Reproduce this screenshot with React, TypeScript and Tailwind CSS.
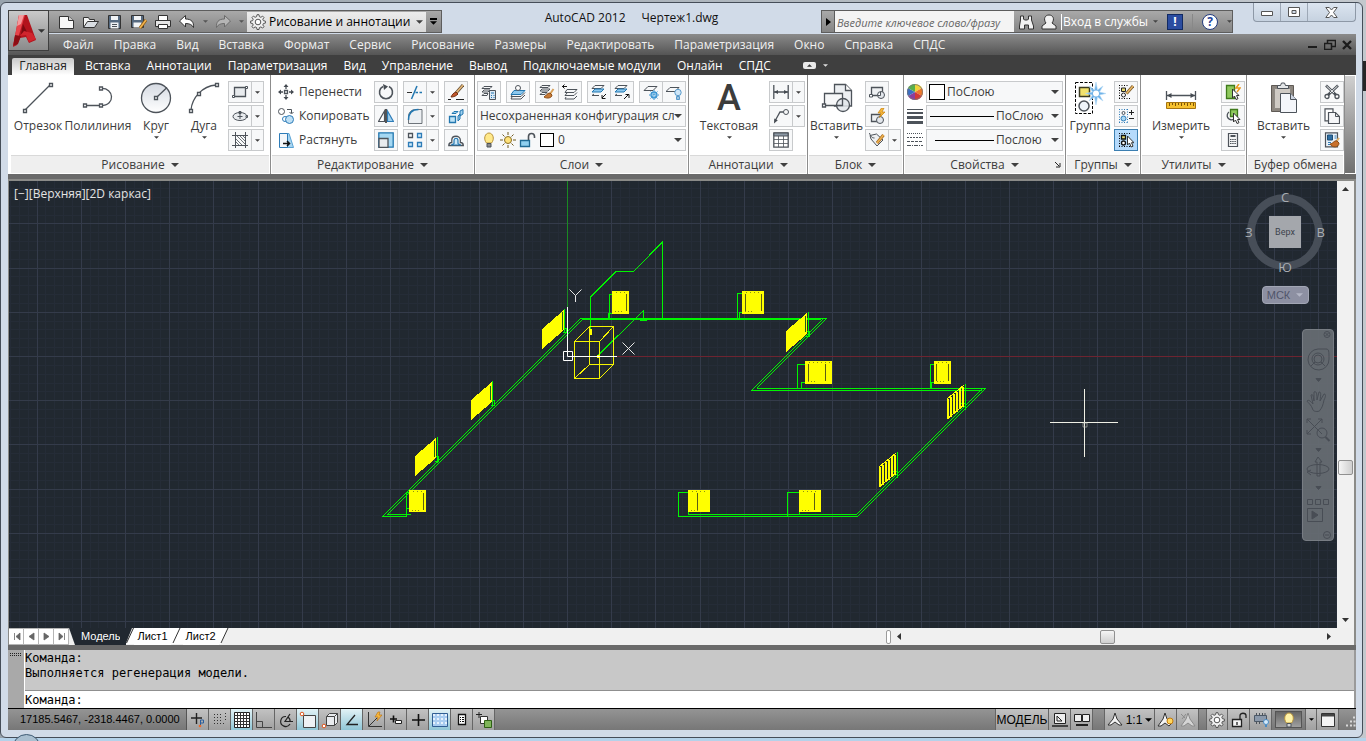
import React from "react";

type IconProps = { children: React.ReactNode; w?: number; h?: number; className?: string };

const Icon = ({ children, w = 16, h = 16, className = "" }: IconProps) => (
  <svg width={w} height={h} viewBox={`0 0 ${w} ${h}`} fill="none" stroke="#4d535a" strokeWidth="1" className={`shrink-0 ${className}`} aria-hidden="true">
    {children}
  </svg>
);

const Caret = ({ size = 7, className = "text-[#404040]" }: { size?: number; className?: string }) => (
  <svg width={size} height={Math.ceil(size / 2)} viewBox="0 0 8 4" className={`shrink-0 ${className}`} aria-hidden="true">
    <path d="M0 0h8L4 4z" fill="currentColor" />
  </svg>
);

/* ---------- big ribbon icons ---------- */

const LineIcon = () => (
  <Icon w={32} h={32} className="stroke-[1.3]">
    <path d="M3 28 28 3" />
    <path d="M1.500 27.500h3v3h-3zM27.500 1.500h3v3h-3z" fill="#fff" />
  </Icon>
);

const PolylineIcon = () => (
  <Icon w={32} h={32} className="stroke-[1.3]">
    <path d="M3 23.500h16c15 0 13-18 0-17" />
    <path d="M1.500 22h3v3h-3zM17.500 22h3v3h-3zM17.500 5h3v3h-3z" fill="#fff" />
  </Icon>
);

const CircleIcon = () => (
  <Icon w={32} h={32} className="stroke-[1.3]">
    <defs>
      <linearGradient id="circ" x1="0" y1="0" x2="0" y2="1">
        <stop offset="0" stopColor="#d5dae2" />
        <stop offset="1" stopColor="#fff" />
      </linearGradient>
    </defs>
    <circle cx="16" cy="16" r="14.500" fill="url(#circ)" />
    <path d="M17 15 27 5.500" />
    <path d="M14.500 14.500h3v3h-3z" fill="#fff" />
  </Icon>
);

const ArcIcon = () => (
  <Icon w={32} h={32} className="stroke-[1.3]">
    <path d="M3 28C4 16 14 4 28 3" />
    <path d="M1.500 27.500h3v3h-3zM27.500 1.500h3v3h-3zM9.500 10.500h3v3h-3z" fill="#fff" />
  </Icon>
);

const InsertIcon = () => (
  <Icon w={32} h={32} className="stroke-[1.3]">
    <path d="M13.500 20V2.500h11l6 6V24h-17z" fill="#eceff2" />
    <path d="M24.500 2.500v6h6" fill="#fff" />
    <path d="M3.500 11.500h18v12h-18z" fill="#f7f8f9" />
    <circle cx="22" cy="23" r="6.500" fill="#e3e7ec" fillOpacity=".85" />
    <path d="M21.500 17v6.500H16" />
    <path d="M1.500 22h3v3h-3z" fill="#fff" />
  </Icon>
);

const GroupIcon = () => (
  <Icon w={32} h={32}>
    <path d="M1.500.5h17v31h-17z" stroke="#000" strokeDasharray="3 1.500" />
    <path d="M5.500 5.500h10v9h-10z" fill="#f2e26c" stroke="#3a3a22" strokeWidth="1.500" />
    <circle cx="10" cy="24" r="5" fill="#eef4fa" strokeWidth="1.500" />
    <path d="M22 0l1.500 8L29 4l-3.500 6 6.500 1.500-6.500 1.500 3.500 6-5.500-4L22 23l-1.500-8-5.500 4 3.500-6-7-1.500 7-1.500-3.500-6 5.500 4z" fill="#6fb2e8" stroke="#b7dbf6" strokeWidth=".6" />
    <circle cx="22" cy="11.500" r="3" fill="#fff" stroke="none" />
  </Icon>
);

const MeasureIcon = () => (
  <Icon w={32} h={32}>
    <path d="M1.500 9v9M30.500 9v9M2 13.500h28" strokeWidth="1.300" />
    <path d="M2 13.500l4.500-2.500v5zM30 13.500 25.500 11v5z" fill="#454b52" stroke="none" />
    <path d="M1.500 20.500h29v6h-29z" fill="#f6c12f" stroke="#a57411" />
    <path d="M4.500 21v3M7.500 21v2M10.500 21v3M13.500 21v2M16.500 21v3M19.500 21v2M22.500 21v3M25.500 21v2M28.500 21v3" stroke="#7b5408" />
  </Icon>
);

const PasteIcon = () => (
  <Icon w={32} h={32}>
    <path d="M3.500 3.500h22v26h-22z" fill="#8c867f" stroke="#5f5a55" />
    <path d="M6.500 6.500h16v20h-16z" fill="#cfcac4" stroke="#8f8a84" />
    <path d="M9.500 6.500v-3h3l1-2.500h3l1 2.500h3v3z" fill="#e4e6e8" />
    <path d="M12.500 11.500h10l6 6v13h-16z" fill="#f4f6fa" />
    <path d="M22.500 11.500v6h6" fill="#cdd5e2" />
  </Icon>
);

/* ---------- small ribbon icons ---------- */

const sm = {
  rect: (
    <Icon><path d="M2.500 3.500h11v9h-11z" fill="#e8ebee" strokeWidth="1.300" /><path d="M.5 11.500h2v2h-2zM13.500 2.500h2v2h-2z" fill="#fff" /></Icon>
  ),
  ellipse: (
    <Icon><ellipse cx="8" cy="8.500" rx="7" ry="4" fill="#e8ebee" /><path d="M8 6v5M5.500 8.500h5M7 3.500h2v2H7zM14 7.500h1.500v2H14z" /></Icon>
  ),
  hatch: (
    <Icon><path d="M3.500 0v16M13.500 0v16M0 3.500h16M0 13.500h16" /><path d="M4 7l6 6M4 10l3 3M5 4l8 8M8 4l5 5M11 4l2 2" stroke="#6d7378" /></Icon>
  ),
  move: (
    <Icon><path d="M8 1v4M8 11v4M1 8h4M11 8h4M6.500 6.500h3v3h-3z" strokeWidth="1.300" /><path d="M8 0l2.500 3h-5zM8 16l2.500-3h-5zM0 8l3-2.500v5zM16 8l-3-2.500v5z" fill="#454b52" stroke="none" /></Icon>
  ),
  copy: (
    <Icon><circle cx="3.500" cy="3.500" r="3" /><circle cx="7" cy="11" r="2.500" stroke="#2e7cb8" fill="#fff" /><circle cx="11.500" cy="11.500" r="4" stroke="#2e7cb8" fill="#bfe0f5" /><path d="M9 1.500h4.500V5M11.500 4l2 2 2-2" /></Icon>
  ),
  stretch: (
    <Icon><path d="M7 1.500h4l4.500 14H7z" fill="#a9d6f2" stroke="#5aa3d4" /><path d="M1.500 1.500h8v14h-8z" fill="#f4f7fa" stroke="#2e7cb8" /><path d="M5 11.500h6M9 9l2.500 2.500L9 14" stroke="#111" strokeWidth="1.500" /></Icon>
  ),
  rotate: (
    <Icon><path d="M11 2.500a6.500 6.500 0 1 1-6 0" strokeWidth="1.600" /><path d="M5 0l5 2.500L6 6z" fill="#454b52" stroke="none" /></Icon>
  ),
  mirror: (
    <Icon><path d="M6.500 3v10.500h-6z" fill="#fff" strokeWidth="1.200" /><path d="M9.500 3v10.500h6z" fill="#9fd0ee" stroke="#2e7cb8" strokeWidth="1.200" /><path d="M8 1v14" strokeWidth="1.500" stroke="#222" /></Icon>
  ),
  scale: (
    <Icon><path d="M.8.8h14.400v14.400H.8z" fill="#a5d8f3" stroke="#2277b0" strokeWidth="1.300" /><path d="M1 6.500h9v9H1z" fill="#e9ecef" strokeWidth="1.300" /></Icon>
  ),
  trim: (
    <Icon><path d="M0 8.500h5" stroke="#333" /><path d="M8.500 8.500h7.500" stroke="#2277b0" strokeDasharray="2.500 1.500" strokeWidth="1.300" /><path d="M10 2 4.500 15" stroke="#2277b0" strokeWidth="1.500" /></Icon>
  ),
  fillet: (
    <Icon><path d="M1.500 15.500V9c0-5 3-7.500 7.500-7.500h6v14z" fill="#eceff2" strokeWidth=".8" /><path d="M1.500 12c0-7 4-10.500 10-10.500" stroke="#2277b0" strokeWidth="1.500" /></Icon>
  ),
  array: (
    <Icon><path d="M1.500 1.500h4v4h-4z" strokeWidth="1.300" /><path d="M10.500 1.500h4v4h-4zM1.500 10.500h4v4h-4zM10.500 10.500h4v4h-4z" fill="#cfe9f8" stroke="#2e7cb8" strokeWidth="1.300" /></Icon>
  ),
  erase: (
    <Icon><path d="M15 1 8 9" stroke="#5a4630" strokeWidth="3" /><path d="M15 1 8 9" stroke="#e2b678" strokeWidth="1.800" /><path d="M8 8c-3 1-4 3-5 5 3 0 5-1 7-3z" fill="#c2562c" stroke="#70300f" /><path d="M0 15.500h3M8 15.500h8" stroke="#222" /></Icon>
  ),
  explode: (
    <Icon><path d="M1.500 8.500h6v6h-6z" fill="#bfe3f6" stroke="#2277b0" strokeWidth="1.300" /><path d="M4 5.500 6 3.500h4l-2 2zM10 8l2-2v5l-2 2zM12 3l3-1.500V6L12 8z" fill="#9fd0ee" stroke="#2277b0" /></Icon>
  ),
  offset: (
    <Icon><path d="M.8 13.500c0-3 2-3 3-3V8c0-5 8.500-5 8.500 0v2.500c1 0 3 0 3 3z" fill="#fff" strokeWidth="1.300" /><path d="M3.500 13c0-1 2.500-1 2.500-1.500V8.500c0-3 4-3 4 0v3c0 .5 2.500.5 2.500 1.500z" fill="#cfe9f8" stroke="#2277b0" strokeWidth="1.200" /></Icon>
  ),
  layerProps: (
    <Icon><path d="M3 2.500h8l-2 2H1zM3 6h6l-2 2H1zM3 9.500h4l-1 2H1z" /><path d="M8.500 6.500h6v9h-6z" fill="#dce9f5" /><path d="M10 9h3M10 11.500h1M12.500 11.500h1M10 13.500h1M12.500 13.500h1" stroke="#2277b0" /></Icon>
  ),
  layerCurrent: (
    <Icon><path d="M4 6.500h11l-4 4H1z" fill="#8cc8ee" stroke="#2277b0" /><path d="M2 11l-1 1.500h10l4-4M2 13l-1 2h10l4-4" /><circle cx="8" cy="4" r="2.500" fill="#fff" /></Icon>
  ),
  layerMatch: (
    <Icon><path d="M3 1.500h8l-2 2H1zM3 5h8l-2 2H1zM3 8.500h5l-2 2H1z" /><path d="M14.500 5 11 10" stroke="#d9a25a" strokeWidth="2" /><path d="M11 9c-3 0-4 3-6 4 3 2 8 1 8-2z" fill="#c77a35" stroke="#8b4c16" /></Icon>
  ),
  layerPrev: (
    <Icon><path d="M0 2.500h5M2.500.5l-2 2 2 2" stroke="#111" /><path d="M5 5.500h10l-3 3H3zM5 9l-2 2.500h9l3-3M4 13l-1 2h9l3-3" /></Icon>
  ),
  layerIso: (
    <Icon><path d="M4 1.500h9l-3 3H1z" /><path d="M4 5h9l-3 3H1z" fill="#8cc8ee" stroke="#2277b0" /><path d="M3 10l-2 1.500h7" /><path d="M15 10l-4 4M11 11v3.500h3.500" stroke="#111" /></Icon>
  ),
  layerUniso: (
    <Icon><path d="M4 1.500h9l-3 3H1z" /><path d="M4 5h9l-3 3H1z" fill="#8cc8ee" stroke="#2277b0" /><path d="M3 10l-2 1.500h7" /><path d="M10 15l4.500-4.500M11.500 10.500H15V14" stroke="#111" /></Icon>
  ),
  layerFreeze: (
    <Icon><path d="M5 2.500h9l-4 4H1z" /><circle cx="11" cy="11" r="3" stroke="#3a94d2" fill="#d9effb" strokeWidth="1.300" /><path d="M11 6v10M6 11h10M7.500 7.500l7 7M14.500 7.500l-7 7" stroke="#3a94d2" strokeDasharray="1.500 1.500" /></Icon>
  ),
  layerOff: (
    <Icon><path d="M4 3.500h9l-4 4H0z" /><circle cx="12" cy="8.500" r="3.200" fill="#cfe6f7" stroke="#5a9bcb" /><path d="M10.500 12.500h3v3h-3z" fill="#9cc3e0" stroke="#5a9bcb" /></Icon>
  ),
  dim: (
    <Icon><path d="M.8 1v14M15.200 1v14M1 8h14" strokeWidth="1.300" /><path d="M1 8l4-2v4zM15 8l-4-2v4z" fill="#454b52" stroke="none" /></Icon>
  ),
  leader: (
    <Icon><circle cx="13" cy="4" r="2.500" /><path d="M10.500 4H7L2 13" strokeWidth="1.300" /><path d="M1 15.500l.3-5 3.500 1.800z" fill="#454b52" stroke="none" /></Icon>
  ),
  table: (
    <Icon><path d="M.8.8h14.400v14.400H.8z" fill="#fff" strokeWidth="1.300" /><path d="M1 1h14v3H1z" fill="#8b98a5" /><path d="M1 7.500h14M1 11.500h14M5.500 4v11M10.500 4v11" strokeWidth=".8" /></Icon>
  ),
  blockNew: (
    <Icon><path d="M2.500 3.500h11v8h-11z" fill="#eef0f2" strokeWidth="1.300" /><circle cx="12" cy="11" r="3.500" fill="#e3e7ec" /><path d="M11.500 8v3.500H9M.5 10.500h3v2.500h-3z" fill="#fff" /></Icon>
  ),
  blockEdit: (
    <Icon><path d="M2.500 6.500h9v7h-9z" fill="#eef0f2" strokeWidth="1.300" /><circle cx="11" cy="12" r="3.500" fill="#e3e7ec" /><path d="M12.500 0 9 5h3l-1.500 4.500L16 4h-3l2-4z" fill="#f6b73c" stroke="#c47e0c" strokeWidth=".7" /></Icon>
  ),
  attr: (
    <Icon><path d="M1 3.500 7.500 2 14 8l-6 6-6-7z" fill="#eef0f2" /><path d="M.5 1c1 4 3 5 5 5" /><path d="M14.500 3 8 11" stroke="#a5691c" strokeWidth="3" /><path d="M14.500 3 8 11" stroke="#f0b352" strokeWidth="1.500" /></Icon>
  ),
  grpEdit: (
    <Icon><path d="M1 1.500h9M1 14.500h11M1.500 1v14" strokeDasharray="1 1.500" stroke="#000" /><path d="M3.500 4h4v3.500h-4z" fill="#e9dc6f" stroke="#222" /><circle cx="5.500" cy="11" r="2" stroke="#222" fill="#fff" /><path d="M15 2 8.500 9.500" stroke="#7a5a2a" strokeWidth="3" /><path d="M15 2 8.500 9.500" stroke="#eab765" strokeWidth="1.500" /></Icon>
  ),
  grpAdd: (
    <Icon><path d="M1 1.500h9M1 14.500h9M1.500 1v14M9.500 1v14" strokeDasharray="1 1.500" stroke="#2e7cb8" /><circle cx="5.500" cy="5" r="1.500" /><circle cx="5.500" cy="10.500" r="2.500" fill="#a9d6f2" stroke="#2e7cb8" /><path d="M11 4.500h5M13.500 2v5M11 10.500h5" stroke="#222" /></Icon>
  ),
  grpSel: (
    <Icon><path d="M1 1.500h12M1 14.500h12M1.500 1v14" strokeDasharray="1 1.500" stroke="#000" /><path d="M3.500 3.500h4V7h-4z" fill="#e9dc6f" stroke="#111" strokeWidth="1.300" /><circle cx="5.500" cy="11" r="2" stroke="#111" strokeWidth="1.300" fill="#fff" /><path d="M9.500 4v9l2-2 1.500 4 2-.8-1.500-3.500h2.500z" fill="#fff" stroke="#333" /></Icon>
  ),
  quickSel: (
    <Icon><path d="M1.500 1.500h8v13h-8z" fill="#8fc95d" stroke="#3f7a1c" strokeWidth="1.300" /><path d="M14 0l-3 4h4l-3 4" stroke="#eb9b1f" strokeWidth="1.500" /><path d="M7.500 5v9l2-2 1.500 3.500 2-.8-1.500-3.200H14z" fill="#fff" stroke="#333" /></Icon>
  ),
  selAll: (
    <Icon><path d="M5.500 1.500h7v7h-7z" fill="#8fc95d" stroke="#3f7a1c" strokeWidth="1.300" /><path d="M4 4a4 4 0 1 0 5 7" strokeWidth="1.300" /><path d="M8.500 5v9l2-2 1.500 3.500 2-.8-1.500-3.200H15z" fill="#fff" stroke="#333" /></Icon>
  ),
  calc: (
    <Icon><path d="M3.500 1.500h9v13h-9z" fill="#f4f5f6" strokeWidth="1.200" /><path d="M5.500 4h5" strokeWidth="2" /><path d="M5 7.500h6M5 9.500h6M5 11.500h6" strokeDasharray="1.500 .7" /></Icon>
  ),
  cut: (
    <Icon><path d="M2 1.500 12 11M14 1.500 4 11" strokeWidth="2.600" /><path d="M2.500 2 10 9M13.500 2 6 9" stroke="#f0f2f4" strokeWidth="1" /><circle cx="3" cy="12.500" r="2" fill="#fff" strokeWidth="1.300" /><circle cx="13" cy="12.500" r="2" fill="#fff" strokeWidth="1.300" /></Icon>
  ),
  copyClip: (
    <Icon><path d="M1 .8h8v12H1z" fill="#fff" strokeWidth="1.200" /><path d="M4.500 4.500h7l4 4v7h-11z" fill="#f5f6f8" strokeWidth="1.200" /><path d="M11.500 4.500v4h4" /></Icon>
  ),
  matchProps: (
    <Icon><path d="M1.500.8h12v14h-12z" fill="#e9f1f8" strokeWidth="1.200" /><path d="M3.500 3h5v5h-5z" fill="#2d6ea3" stroke="#1d4c74" /><path d="M10.500 4h2M10.500 6h2M4 10.500h3M4 12.500h2" stroke="#2e7cb8" /><path d="M15 6l-3 4" stroke="#e3b36b" strokeWidth="2" /><path d="M13 9c-3-1-4 3-7 3 2 4 9 4 9-1z" fill="#c9702b" stroke="#8b4c16" /></Icon>
  ),
};

/* ---------- ribbon building blocks ---------- */

const cell = "flex h-[22px] w-6 items-center justify-center border border-[#c8cacc] bg-[#f7f8f9]";

const Small = ({ icon, label, active }: { icon: React.ReactNode; label: string; active?: boolean }) => (
  <button aria-label={label} className={active ? "flex h-[22px] w-6 items-center justify-center border border-[#3c7fb1] bg-[#b5dafc]" : cell}>
    {icon}
  </button>
);

const Split = ({ icon, label }: { icon: React.ReactNode; label: string }) => (
  <div className="flex">
    <button aria-label={label} className={cell}>{icon}</button>
    <button aria-label={`${label}: ещё`} className="flex h-[22px] w-3 items-center justify-center border border-l-0 border-[#c8cacc] bg-[#f7f8f9]">
      <Caret size={5} />
    </button>
  </div>
);

const Col = ({ children, className = "" }: { children: React.ReactNode; className?: string }) => (
  <div className={`flex flex-col gap-[2px] pt-[6px] ${className}`}>{children}</div>
);

const Big = ({ icon, label, width, caret }: { icon: React.ReactNode; label: string; width: string; caret?: boolean }) => (
  <button className={`flex flex-col items-center pt-[7px] ${width}`}>
    {icon}
    <span className="mt-1 whitespace-nowrap leading-4">{label}</span>
    {caret && <Caret size={5} className="mt-[2px] text-[#404040]" />}
  </button>
);

const TextBtn = ({ icon, label }: { icon: React.ReactNode; label: string }) => (
  <button className="flex h-[22px] items-center gap-[5px] whitespace-nowrap px-[2px]">
    {icon}
    {label}
  </button>
);

const Panel = ({ title, width, children, noCaret, launcher }: { title: string; width: string; children: React.ReactNode; noCaret?: boolean; launcher?: boolean }) => (
  <section className={`flex shrink-0 flex-col border-r border-[#8c8c8c] ${width}`}>
    <div className="flex h-20">{children}</div>
    <div className="mx-px flex h-[18px] items-center justify-center gap-[6px] whitespace-nowrap border-t border-[#d9d9d9] bg-[#efefef] leading-4">
      <span>{title}</span>
      {!noCaret && <Caret size={8} />}
      {launcher && (
        <Icon w={7} h={7} className="absolute ml-[146px]"><path d="M1 1l4 4M6 2v4H2" stroke="#222" /></Icon>
      )}
    </div>
  </section>
);

const Picker = ({ label, value, before, pad = "" }: { label: string; value: string; before?: React.ReactNode; pad?: string }) => (
  <div className="flex h-[22px] w-full items-center border border-[#c8cacc] bg-[#f7f8f9] pr-[3px]">
    {before}
    <select aria-label={label} className={`h-full min-w-0 flex-1 appearance-none bg-transparent outline-none ${pad}`}>
      <option>{value}</option>
    </select>
    <Caret size={8} />
  </div>
);

/* ---------- title bar ---------- */

const AppButton = () => (
  <button aria-label="Меню приложения" className="absolute left-0 top-[7px] z-10 flex h-[41px] w-[41px] items-center border border-[#3f3f3f] bg-linear-to-b from-[#c9c9c9] to-[#8b8b8b]">
    <svg width="29" height="36" viewBox="0 0 29 36" aria-hidden="true">
      <path d="M10 2h8l9 25-7 3-3-6-6 1-3 7-4 2z" fill="#b3131c" />
      <path d="M10 2h6l-6 20-2 9-4 2z" fill="#e6434a" />
      <path d="M14 11l4 8-6 2z" fill="#7d0a10" />
      <path d="M4 33l5-2 3-8-6-1z" fill="#8c0d14" />
      <path d="M10 2h5l-3 9-4 2z" fill="#f59a9c" />
      <path d="M11 23l6-1 3 7 7-3-4-6-8-2z" fill="#d1252d" />
    </svg>
    <Caret size={7} className="text-[#333]" />
  </button>
);

const qatIcons = [
  { label: "Создать", icon: <Icon w={18}><path d="M1.500 2.500h9l5 4v8h-14z" fill="#f8f8f8" stroke="#333" /><path d="M10.500 2.500v4h5" fill="#ccc" stroke="#333" /></Icon> },
  { label: "Открыть", icon: <Icon w={18}><path d="M1.500 13.500v-10h5l1 2h5v2" fill="#f3f3f3" stroke="#333" /><path d="M1.500 13.500 5.500 7.500h11l-4 6z" fill="#d9dde2" stroke="#333" /></Icon> },
  { label: "Сохранить", icon: <Icon w={18}><path d="M2.500 1.500h12v13h-12z" fill="#566a80" stroke="#333" /><path d="M5 2h7v4H5zM4.500 8.500h8v6h-8z" fill="#f1f3f5" stroke="none" /><path d="M6 10.500h5M6 12.500h5" /></Icon> },
  { label: "Сохранить как", icon: <Icon w={18}><path d="M1.500 1.500h12v12h-12z" fill="#566a80" stroke="#333" /><path d="M4 2h7v4H4zM3.500 8.500h8v5h-8z" fill="#f1f3f5" stroke="none" /><path d="M16 6l-6 8" stroke="#8b5a12" strokeWidth="3" /><path d="M16 6l-6 8" stroke="#f3b550" strokeWidth="1.600" /></Icon> },
  { label: "Печать", icon: <Icon w={18}><path d="M4.500 6V1.500h9V6" fill="#fff" stroke="#333" /><path d="M1.500 6.500h15v6h-15z" fill="#e6e6e6" stroke="#333" /><path d="M4.500 10.500h9v4h-9z" fill="#fff" stroke="#333" /></Icon> },
];

const GearIcon = ({ size = 16 }: { size?: number }) => (
  <svg width={size} height={size} viewBox="0 0 16 16" fill="#f1f1f1" stroke="#555" aria-hidden="true" className="shrink-0">
    <path d="M7 .7h2l.4 2 1.500.6 1.700-1.200 1.400 1.400-1.200 1.700.6 1.500 2 .4v2l-2 .4-.6 1.500 1.200 1.700-1.400 1.400-1.700-1.200-1.500.6-.4 2H7l-.4-2-1.500-.6-1.700 1.200L2 12.700l1.200-1.700-.6-1.500-2-.4v-2l2-.4.6-1.500L2 3.500l1.400-1.400 1.700 1.200 1.500-.6z" />
    <circle cx="8" cy="8" r="2.800" fill="#fff" />
  </svg>
);

const TitleBar = () => (
  <header className="relative flex h-[31px] shrink-0 items-start">
    <div className="ml-10 mt-[7px] flex h-[23px] items-center border border-[#5d5d5d] bg-linear-to-b from-[#a9a9a9] to-[#858585] pl-[6px]">
      {qatIcons.map((q) => (
        <button key={q.label} aria-label={q.label} className="flex w-6 justify-center">{q.icon}</button>
      ))}
      <button aria-label="Отменить" className="flex w-6 justify-center">
        <Icon w={18}><path d="M1.500 7 7.500 1.500v3.500c6 0 8.500 3 8 8.500-1.500-3-4-4-8-4v3.500z" fill="#fff" stroke="#333" /></Icon>
      </button>
      <button aria-label="Список отмены" className="flex w-3 justify-center"><Caret size={5} className="text-[#555]" /></button>
      <button aria-label="Повторить" className="flex w-6 justify-center">
        <Icon w={18}><path d="M16.500 7 10.500 1.500v3.500c-6 0-8.500 3-8 8.500 1.500-3 4-4 8-4v3.500z" fill="#b5b5b5" stroke="#6b6b6b" /></Icon>
      </button>
      <button aria-label="Список повтора" className="flex w-3 justify-center"><Caret size={5} className="text-[#555]" /></button>
      <div className="flex h-[20px] w-[179px] items-center gap-[3px] bg-linear-to-b from-[#ececec] to-[#d9d9d9] px-[3px] text-black">
        <GearIcon />
        <select aria-label="Рабочее пространство" className="min-w-0 flex-1 appearance-none bg-transparent outline-none">
          <option>Рисование и аннотации</option>
        </select>
        <Caret size={7} />
      </div>
      <button aria-label="Адаптация панели" className="flex h-full w-[15px] flex-col items-center justify-center gap-[1px]">
        <span className="h-[2px] w-[7px] bg-black" />
        <Caret size={7} className="text-black" />
      </button>
    </div>

    <h1 className="flex min-w-0 flex-1 justify-center gap-4 whitespace-nowrap pt-[6px] leading-[18px] text-[#111]">
      <span>AutoCAD 2012</span>
      <span>Чертеж1.dwg</span>
    </h1>

    <div className="mr-5 mt-[7px] flex h-[23px] w-[412px] items-center border border-[#5d5d5d] bg-linear-to-b from-[#a9a9a9] to-[#858585] text-white">
      <button aria-label="Свернуть поиск" className="flex w-3 shrink-0 justify-center">
        <svg width="5" height="8" viewBox="0 0 5 8" aria-hidden="true"><path d="M0 0l5 4-5 4z" /></svg>
      </button>
      <input aria-label="Поиск" placeholder="Введите ключевое слово/фразу" className="h-full w-[180px] shrink-0 border-l border-[#5d5d5d] bg-[#f4f4f4] pl-[2px] pt-[2px] text-[11px] italic text-[#666] outline-none placeholder:text-[#666]" />
      <button aria-label="Найти" className="ml-[4px]">
        <Icon><path d="M2.500 2h3v3l1 1h3l1-1V2h3v4l2 6v3h-5v-4h-4v4h-5v-3l1-6z" fill="#f2f2f2" stroke="#333" /></Icon>
      </button>
      <button className="ml-[7px] flex items-center gap-[4px] whitespace-nowrap">
        <Icon><path d="M5 9C2 5 4 1 8 1s6 4 3 8l4 3v3H1v-3z" fill="#f2f2f2" stroke="#333" /></Icon>
        <span className="border-l border-white pl-[1px] leading-4">Вход в службы</span>
      </button>
      <Caret size={5} className="ml-[5px] text-[#444]" />
      <button aria-label="Exchange" className="ml-[9px] flex h-4 w-4 shrink-0 items-center justify-center border border-[#122a63] bg-[#2c4da0] text-[12px] font-bold leading-none">!</button>
      <span className="ml-[9px] h-4 w-px bg-[#888]" />
      <button aria-label="Справка" className="ml-[9px] flex h-4 w-4 shrink-0 items-center justify-center rounded-full border border-[#223a7d] bg-white text-[12px] font-bold leading-none text-[#24449c]">?</button>
      <Caret size={5} className="ml-[9px] text-[#444]" />
    </div>

    <div className="flex h-[19px] w-[103px] rounded-b-[4px] border border-t-0 border-[#8d98a6] bg-linear-to-b from-[#dce5f0] to-[#c6d2e0]">
      <button aria-label="Свернуть" className="flex flex-1 items-center justify-center border-r border-[#9da8b6]">
        <Icon w={13} h={9}><path d="M.5 3.500h11v4H.5z" fill="#fff" stroke="#555" /></Icon>
      </button>
      <button aria-label="Развернуть" className="flex flex-1 items-center justify-center border-r border-[#9da8b6]">
        <Icon w={12} h={11}><path d="M.5.5h11v9H.5zM4 3.500h4v3H4z" fill="#fff" fillRule="evenodd" stroke="#555" /></Icon>
      </button>
      <button aria-label="Закрыть" className="flex w-[47px] items-center justify-center">
        <Icon w={13} h={11}><path d="M.8.5h3.500L6.500 3 8.700.5h3.500L8.500 5.500l3.700 5H8.700L6.500 8l-2.200 2.500H.8l3.700-5z" fill="#fff" stroke="#555" /></Icon>
      </button>
    </div>
    <AppButton />
  </header>
);

/* ---------- menus ---------- */

const menus = ["Файл", "Правка", "Вид", "Вставка", "Формат", "Сервис", "Рисование", "Размеры", "Редактировать", "Параметризация", "Окно", "Справка", "СПДС"];
const tabs = ["Вставка", "Аннотации", "Параметризация", "Вид", "Управление", "Вывод", "Подключаемые модули", "Онлайн", "СПДС"];

const MenuBar = () => (
  <nav className="flex h-[21px] shrink-0 items-center gap-5 whitespace-nowrap bg-linear-to-b from-[#8b8b8b] to-[#555] pl-[55px] text-[#f0f0f0]">
    {menus.map((m) => (
      <a key={m} href="#">{m}</a>
    ))}
    <div className="ml-auto flex items-center gap-[6px] pr-[4px]">
      <button aria-label="Свернуть чертеж"><Icon w={11} h={11}><path d="M1 8h9" stroke="#1c1c1c" strokeWidth="2" /></Icon></button>
      <button aria-label="Восстановить чертеж"><Icon w={12} h={11}><path d="M3.500 4V1.500h8v6H8M.5 4.500h7v6h-7z" stroke="#1c1c1c" strokeWidth="1.500" /></Icon></button>
      <button aria-label="Закрыть чертеж"><Icon w={10} h={10}><path d="M1 1l8 8M9 1 1 9" stroke="#1c1c1c" strokeWidth="2.400" /></Icon></button>
    </div>
  </nav>
);

const TabRow = () => (
  <nav className="flex h-5 shrink-0 items-center gap-4 whitespace-nowrap bg-[#3f3f3f] pl-1 pt-px text-white">
    <a href="#" className="-mr-[5px] mt-auto flex h-[17px] w-[62px] justify-center rounded-t-[2px] bg-linear-to-b from-[#c9c9c9] to-white leading-4 text-[#222]">Главная</a>
    {tabs.map((t) => (
      <a key={t} href="#">{t}</a>
    ))}
    <button aria-label="Свернуть ленту" className="ml-4 flex items-center gap-[7px]">
      <span className="flex h-[7px] w-[13px] items-center justify-center rounded-[2px] bg-[#e9e9e9]">
        <Caret size={5} className="rotate-180 text-[#333]" />
      </span>
      <Caret size={5} className="text-[#ddd]" />
    </button>
  </nav>
);

/* ---------- ribbon ---------- */

const LayerFlags = () => (
  <div className="flex items-center gap-[3px] pl-[3px]">
    <Icon w={16} h={16}><path d="M5.500 11C2 7 4 1 8 1s6 6 2.500 10z" fill="#ffe98a" stroke="#b8923a" /><path d="M6 11.500h4v3.500H6z" fill="#8c8c8c" /></Icon>
    <Icon w={16} h={16}><circle cx="8" cy="8" r="3.500" fill="#ffe27a" stroke="#8b6f22" /><path d="M8 0v3M8 13v3M0 8h3M13 8h3M2.500 2.500l2 2M11.500 11.500l2 2M13.500 2.500l-2 2M4.500 11.500l-2 2" stroke="#6f5a20" /></Icon>
    <Icon w={17} h={16}><path d="M1.500 8.500h9v6h-9z" fill="#8fd0f0" stroke="#1f6a94" strokeWidth="1.300" /><path d="M9.500 8V4.500c0-4 6-4 6 0V6" strokeWidth="1.600" /></Icon>
    <span className="ml-px h-[14px] w-[14px] border border-black bg-white" />
  </div>
);

const Ribbon = () => (
  <div className="flex h-[99px] shrink-0 bg-white pl-[2px] text-[#3c3c3c]">
    <Panel title="Рисование" width="w-[261px]">
      <div className="flex pl-[2px]">
        <Big icon={<LineIcon />} label="Отрезок" width="w-[52px]" />
        <Big icon={<PolylineIcon />} label="Полилиния" width="w-[68px]" />
        <Big icon={<CircleIcon />} label="Круг" width="w-12" caret />
        <Big icon={<ArcIcon />} label="Дуга" width="w-12" caret />
      </div>
      <Col>
        <Split icon={sm.rect} label="Прямоугольник" />
        <Split icon={sm.ellipse} label="Эллипс" />
        <Split icon={sm.hatch} label="Штриховка" />
      </Col>
    </Panel>

    <Panel title="Редактирование" width="w-[204px]">
      <Col className="w-[103px] pl-[5px]">
        <TextBtn icon={sm.move} label="Перенести" />
        <TextBtn icon={sm.copy} label="Копировать" />
        <TextBtn icon={sm.stretch} label="Растянуть" />
      </Col>
      <div className="flex gap-[5px]">
        <Col>
          <Small icon={sm.rotate} label="Повернуть" />
          <Small icon={sm.mirror} label="Зеркало" />
          <Small icon={sm.scale} label="Масштаб" />
        </Col>
        <Col>
          <Split icon={sm.trim} label="Обрезать" />
          <Split icon={sm.fillet} label="Сопряжение" />
          <Split icon={sm.array} label="Массив" />
        </Col>
        <Col>
          <Small icon={sm.erase} label="Стереть" />
          <Small icon={sm.explode} label="Расчленить" />
          <Small icon={sm.offset} label="Подобие" />
        </Col>
      </div>
    </Panel>

    <Panel title="Слои" width="w-[214px]">
      <Col className="w-[211px] pl-[2px]">
        <div className="flex justify-between">
          <Small icon={sm.layerProps} label="Свойства слоя" />
          <Small icon={sm.layerCurrent} label="Сделать текущим" />
          <div className="flex -space-x-px"><Small icon={sm.layerMatch} label="Копировать слой" /><Small icon={sm.layerPrev} label="Предыдущее" /></div>
          <div className="flex -space-x-px"><Small icon={sm.layerIso} label="Изолировать" /><Small icon={sm.layerUniso} label="Отключить изоляцию" /></div>
          <div className="flex -space-x-px"><Small icon={sm.layerFreeze} label="Заморозить" /><Small icon={sm.layerOff} label="Отключить" /></div>
        </div>
        <Picker label="Состояние слоев" value="Несохраненная конфигурация слоев" pad="pl-[2px]" />
        <Picker label="Слой" value="0" before={<LayerFlags />} pad="pl-1" />
      </Col>
    </Panel>

    <Panel title="Аннотации" width="w-[119px]">
      <Big
        icon={<span className="flex h-8 w-8 items-center justify-center font-['Roboto'] text-[36px] font-medium leading-8">A</span>}
        label="Текстовая"
        width="w-20"
        caret
      />
      <Col>
        <Split icon={sm.dim} label="Размер" />
        <Split icon={sm.leader} label="Выноска" />
        <Small icon={sm.table} label="Таблица" />
      </Col>
    </Panel>

    <Panel title="Блок" width="w-[96px]">
      <Big icon={<InsertIcon />} label="Вставить" width="w-[57px]" caret />
      <Col>
        <Small icon={sm.blockNew} label="Создать блок" />
        <Small icon={sm.blockEdit} label="Редактор блоков" />
        <Split icon={sm.attr} label="Атрибуты" />
      </Col>
    </Panel>

    <Panel title="Свойства" width="w-[162px]" launcher>
      <Col className="w-[22px] items-center">
        <Icon h={22}>
          <path d="M8 11V3A8 8 0 0 1 15 7z" fill="#f0d33c" stroke="none" />
          <path d="M8 11l7-4a8 8 0 0 1 0 8z" fill="#ef7a2b" stroke="none" />
          <path d="M8 11l7 4a8 8 0 0 1-7 4z" fill="#d43a37" stroke="none" />
          <path d="M8 11v8a8 8 0 0 1-7-4z" fill="#8b3f9e" stroke="none" />
          <path d="M8 11l-7 4a8 8 0 0 1 0-8z" fill="#3a6fc4" stroke="none" />
          <path d="M8 11 1 7a8 8 0 0 1 7-4z" fill="#58b04a" stroke="none" />
          <circle cx="8" cy="11" r="7.500" stroke="#777" strokeWidth=".8" />
        </Icon>
        <Icon h={22}><path d="M0 4.500h16" /><path d="M0 8h16" strokeWidth="2" /><path d="M0 12.500h16" strokeWidth="3" /><path d="M0 17.500h16" strokeWidth="3" /></Icon>
        <Icon h={22}><path d="M0 4.500h16" strokeDasharray="1 1" /><path d="M0 8.500h16" strokeDasharray="2 1" /><path d="M0 12.500h16" strokeDasharray="3 1" /><path d="M0 16.500h16" strokeDasharray="4 1 1 1" /></Icon>
      </Col>
      <Col className="w-[137px]">
        <Picker label="Цвет" value="ПоСлою" before={<span className="ml-[2px] h-4 w-4 border border-black bg-white" />} pad="pl-[2px]" />
        <Picker label="Вес линий" value="ПоСлою" before={<span className="ml-[3px] h-px w-16 bg-black" />} pad="pl-[2px]" />
        <Picker label="Тип линий" value="Послою" before={<span className="ml-2 h-px w-[59px] bg-black" />} pad="pl-[2px]" />
      </Col>
    </Panel>

    <Panel title="Группы" width="w-[75px]">
      <Big icon={<GroupIcon />} label="Группа" width="w-12" />
      <Col>
        <Small icon={sm.grpEdit} label="Редактировать группу" />
        <Small icon={sm.grpAdd} label="Добавить в группу" />
        <Small icon={sm.grpSel} label="Выбор группы" active />
      </Col>
    </Panel>

    <Panel title="Утилиты" width="w-[106px]">
      <Big icon={<MeasureIcon />} label="Измерить" width="w-20" caret />
      <Col>
        <Small icon={sm.quickSel} label="Быстрый выбор" />
        <Small icon={sm.selAll} label="Выбрать все" />
        <Small icon={sm.calc} label="Калькулятор" />
      </Col>
    </Panel>

    <Panel title="Буфер обмена" width="w-[98px]" noCaret>
      <Big icon={<PasteIcon />} label="Вставить" width="w-[73px]" caret />
      <Col>
        <Small icon={sm.cut} label="Вырезать" />
        <Small icon={sm.copyClip} label="Копировать" />
        <Small icon={sm.matchProps} label="Копирование свойств" />
      </Col>
    </Panel>
    <div className="mb-px mr-px mt-px flex-1 bg-linear-to-b from-[#d0d0d0] to-[#707070]" />
  </div>
);

/* ---------- model space ---------- */

const PITCH = 44.2;
const ORIGIN = { x: 567, y: 356 };

const gridPath = (minor: boolean) => {
  let d = "";
  const step = minor ? PITCH / 5 : PITCH;
  for (let i = -70; i <= 200; i++) {
    if (minor && i % 5 === 0) continue;
    const x = Math.round(ORIGIN.x + i * step) + 0.5;
    const y = Math.round(ORIGIN.y + i * step) + 0.5;
    if (x > 0 && x < 2600) d += `M${x} 150V1600`;
    if (y > 150 && y < 1600) d += `M0 ${y}H2600`;
  }
  return d;
};

// front-facing radiators: left, top, width, offsets of the dark section lines
const radiators = [
  { x: 612, y: 291, w: 17, h: 23, gaps: [14] },
  { x: 742, y: 291, w: 22, h: 23, gaps: [3, 19] },
  { x: 805, y: 361, w: 27, h: 23, gaps: [3, 20] },
  { x: 934, y: 361, w: 17, h: 23, gaps: [2, 14] },
  { x: 409, y: 490, w: 17, h: 22, gaps: [14] },
  { x: 688, y: 490, w: 22, h: 22, gaps: [9] },
  { x: 799, y: 490, w: 22, h: 22, gaps: [15] },
];

// radiators drawn on the slanted runs: left, top of left edge, width, rise, height
const slanted = [
  { x: 542, y: 329, w: 22, rise: 19, h: 20, striped: false },
  { x: 471, y: 400, w: 21, rise: 18, h: 20, striped: false },
  { x: 415, y: 456, w: 21, rise: 18, h: 20, striped: false },
  { x: 786, y: 331, w: 21, rise: 18, h: 21, striped: false },
  { x: 947, y: 399, w: 17, rise: 14, h: 20, striped: true },
  { x: 879, y: 467, w: 17, rise: 14, h: 20, striped: true },
];

const Drawing = () => (
  <svg className="absolute inset-0 h-full w-full" aria-label="Чертеж">
    <g transform="translate(-9 -181)" fill="none" strokeWidth="1">
      <path d={gridPath(true)} stroke="#252c37" shapeRendering="crispEdges" />
      <path d={gridPath(false)} stroke="#343b4a" shapeRendering="crispEdges" />
      <path d="M567.500 150V307" stroke="#1a8a22" shapeRendering="crispEdges" />
      <path d="M617 356.500H2600" stroke="#6e2430" shapeRendering="crispEdges" />

      <g stroke="#00f500" shapeRendering="crispEdges">
        {/* riser */}
        <path d="M590.500 330V297L616.500 271H634L662.500 242V319M658 318.500h8" />
        <path d="M597.500 356 643.500 310.500V320M640 320.500h7" />
        {/* left run */}
        <path d="M580.500 318.500 382.500 516.500H407M582.500 319.500 387.500 514.500H411" />
        <path d="M580 318.500H826M583 319.500H821" />
        <path d="M406.500 516V492.500h3M564.500 309V332M492.500 381V406M437.500 437V463" />
        <path d="M562 328.500h4v4h-3M489 400.500h5v5h-3M434 456.500h4v5h-3M409 508.500h-3v6" />
        {/* upper right run */}
        <path d="M826.500 318.500 756.500 388.500M822.500 319.500 751.500 390.500M751 390.500H982M757 388.500H985" />
        <path d="M609.500 320V294.500h3M608.500 318v-5h4M737.500 320V293.500h6M739.500 320V312.500h4M808.500 312V337" />
        <path d="M797.500 389V364.500h8M801.500 389V382.500h4M930.500 389V364.500h4M931.500 389V382.500h3" />
        <path d="M804 331.500h5v5h-4" />
        {/* lower right run */}
        <path d="M985.500 388.500 857.500 516.500M981.500 389.500 856.500 514.500M678 516.500H858M688 514.500H857" />
        <path d="M965.500 384V409M897.500 452V478M961 403.500h4v6M893 471.500h4v6" />
        <path d="M678.500 516V492.500h10M688.500 514v-6M787.500 516V492.500h12M799.500 514v-6" />
      </g>

      <g fill="#ffff00" shapeRendering="crispEdges">
        {radiators.map((r, i) => (
          <g key={i}>
            <rect x={r.x} y={r.y} width={r.w} height={r.h} />
            {r.gaps.map((g) => (
              <path key={g} d={`M${r.x + g + 0.5} ${r.y + 3}v17`} stroke="#5b5f14" />
            ))}
            <path d={`M${r.x + 4} ${r.y + 1.500}h${r.w - 6}`} stroke="#8b8f14" strokeDasharray="1 3" />
            <path d={`M${r.x + 3} ${r.y + 20.500}h${Math.min(8, r.w - 6)}`} stroke="#8b8f14" strokeDasharray="1 2" />
          </g>
        ))}
        {slanted.map((s, i) =>
          s.striped ? (
            <g key={i} stroke="#ffff00">
              {[0, 3, 6, 9, 12, 15].map((o) => (
                <path key={o} strokeWidth="2" d={`M${s.x + o + 1} ${s.y - Math.round((o * s.rise) / s.w)}v${s.h}`} />
              ))}
              <path d={`M${s.x} ${s.y}l${s.w} ${-s.rise}M${s.x} ${s.y + s.h}l${s.w} ${-s.rise}`} fill="none" />
            </g>
          ) : (
            <path key={i} d={`M${s.x} ${s.y}l${s.w} ${-s.rise}v${s.h}l${-s.w} ${s.rise}z`} />
          )
        )}
      </g>
      <path d="M562.500 312v18M490.500 386v14M434.500 441v16M805.500 316v16" stroke="#1d5f1d" shapeRendering="crispEdges" />

      {/* boiler */}
      <path
        d="M574.500 341.500h25v37h-25zM589.500 326.500h24v38h-24zM574.500 341.500l15-15M599.500 341.500l14-15M574.500 378.500l15-14M599.500 378.500l14-14"
        stroke="#f5f500"
        shapeRendering="crispEdges"
      />
      <path d="M590 329h2v6h-2zM597 355h3v3h-3z" fill="#ffff00" />

      {/* axes icon */}
      <path d="M567.500 307V356.500H617M563.500 351.500h9v9h-9z" stroke="#fff" />
      <path d="M569.500 289.500 575.500 295.500 581.500 289.500M575.500 295.500V302M622.500 342.500l12 12M634.500 342.500l-12 12" stroke="#e6e6e6" />

      {/* cursor */}
      <path d="M1050 422.500H1118M1084.500 389V457" stroke="#f0f0e6" />
      <path d="M1083 423h4v4h-4z" stroke="#c8c8c0" strokeWidth=".6" />
    </g>
  </svg>
);

const ViewCube = () => (
  <div className="relative flex h-[76px] w-[76px] items-center justify-center rounded-full border-[8px] border-[#474e58] text-[#a9adb2]">
    <button className="h-8 w-8 bg-[#a4a7ac] text-center font-['Roboto'] text-[9px] leading-8 text-[#3d434d]">Верх</button>
    <span className="absolute -top-[13px] text-[13px] leading-4">С</span>
    <span className="absolute -bottom-[13px] text-[13px] leading-4">Ю</span>
    <span className="absolute -left-[10px] text-[13px] leading-4">З</span>
    <span className="absolute -right-[10px] text-[13px] leading-4">В</span>
  </div>
);

const NavBar = () => (
  <div className="flex h-[212px] w-8 flex-col items-center rounded-[4px] border border-[#787d84] bg-[#666b72]/95">
    <Icon w={30} h={210} className="stroke-[#484d55]">
      <circle cx="24" cy="4.500" r="3" /><path d="M22.500 3l3 3M25.500 3l-3 3" />
      <path d="M15 19h8c3 0 3 2 3 10a10.500 10.500 0 1 1-11-10z" /><circle cx="15" cy="29" r="6" /><circle cx="15" cy="29" r="4" /><path d="M8 36l4-4M22 36l-4-4" />
      <path d="M13 48.500h5l-2.500 3z" fill="#484d55" />
      <path d="M10 80c-2-6-5-7-6-9 2-2 4 1 6 3L8 65c2-1 2 0 3 6l0-9c2-1 3 0 3 8l2-8c2 0 2 1 1 9l4-7c2 0 2 2 0 6-1 5-2 8-4 10 0 2-6 2-7 0z" />
      <path d="M4 89l15 15M19 89 4 104M4 93v-4h4M15 89h4v4M4 100v4h4" /><circle cx="19" cy="103" r="5" /><path d="M22.500 107l4 4" strokeWidth="2" />
      <path d="M13 118.500h5l-2.500 3z" fill="#484d55" />
      <ellipse cx="15" cy="139" rx="11" ry="4.500" /><path d="M15 127l-3 5h2v14h3v-14h2zM8 140l-4 2 4 3" />
      <path d="M13 156.500h5l-2.500 3z" fill="#484d55" />
      <path d="M4.500 169.500h5v5h-5zM12.500 169.500h5v5h-5zM20.500 169.500h5v5h-5zM4.500 178.500h15v13h-15z" /><path d="M9 181l6 4-6 4z" fill="#484d55" />
      <circle cx="24" cy="205" r="3.500" /><path d="M22 205h4" />
    </Icon>
  </div>
);

const arrow = {
  up: "M0 5h7L3.500 1z",
  down: "M0 1h7L3.500 5z",
  left: "M5 0v7L1 3.500z",
  right: "M1 0v7l4-3.500z",
};

const Arrow = ({ dir }: { dir: keyof typeof arrow }) => (
  <svg width="7" height="7" viewBox="0 0 7 7" aria-hidden="true"><path d={arrow[dir]} fill="#333" /></svg>
);

const Canvas = () => (
  <main className="flex min-h-0 flex-1 border-l border-r-2 border-t-2 border-[#8b8b88]">
    <div className="relative min-w-0 flex-1 overflow-hidden bg-[#212830]">
      <Drawing />
      <div className="absolute left-[5px] top-[5px] whitespace-nowrap leading-4 text-[#e3e3e3]">[−][Верхняя][2D каркас]</div>
      <div className="absolute right-[14px] top-[13px] flex flex-col items-center">
        <ViewCube />
        <button className="mt-[16px] flex h-[18px] w-[47px] items-center justify-center gap-[6px] rounded-[4px] border border-[#a2a6b4] bg-[#8d90a2] font-['Liberation_Sans'] text-[11px] text-[#50556a]">
          МСК <Caret size={7} className="text-[#b4b7c6]" />
        </button>
      </div>
      <div className="absolute right-[3px] top-[148px]"><NavBar /></div>
    </div>
    <div className="flex w-[17px] flex-col items-center bg-[#f1f1f1]">
      <button aria-label="Вверх" className="flex h-4 w-full items-center justify-center"><Arrow dir="up" /></button>
      <div className="flex flex-[263]" />
      <div className="h-[15px] w-[15px] rounded-[2px] border border-[#909090] bg-linear-to-r from-[#f5f5f5] to-[#cfcfcf]" />
      <div className="flex flex-[137]" />
      <button aria-label="Вниз" className="flex h-4 w-full items-center justify-center"><Arrow dir="down" /></button>
    </div>
  </main>
);

const SheetTabs = () => (
  <div className="flex h-[17px] shrink-0 items-stretch border-l border-r-2 border-[#8b8b88] bg-[#f0f0f0] font-['Liberation_Sans'] text-[11px] text-black">
    {["M3.500 1v7M9 1v7L5 4.500z", "M8 1v7L3 4.500z", "M3 1v7l5-3.500z", "M8.500 1v7M3 1v7l4-3.500z"].map((d, i) => (
      <button key={i} aria-label={["Первый лист", "Предыдущий лист", "Следующий лист", "Последний лист"][i]} className="flex w-[15px] items-center justify-center border border-l-0 border-[#b5b5b5] bg-white">
        <Icon w={11} h={9}><path d={d} fill="#666" stroke="#666" strokeWidth=".8" /></Icon>
      </button>
    ))}
    <svg width="8" height="17" viewBox="0 0 8 17" aria-hidden="true"><path d="M0 0h8v17H6z" fill="#212830" /></svg>
    <a href="#" className="flex items-center bg-[#212830] pl-1 text-white">Модель</a>
    <svg width="14" height="17" viewBox="0 0 14 17" aria-hidden="true"><path d="M0 0h12L6 15v2H0z" fill="#212830" /><path d="M14 0 7 16h7z" fill="#fff" /><path d="M13.500 0 6.500 15" stroke="#333" /></svg>
    <a href="#" className="flex items-center bg-white px-[3px]">Лист1</a>
    <svg width="12" height="17" viewBox="0 0 12 17" aria-hidden="true"><path d="M0 0h12v16H0z" fill="#fff" /><path d="M9 0 2 15" stroke="#333" /></svg>
    <a href="#" className="flex items-center bg-white px-[3px]">Лист2</a>
    <svg width="12" height="17" viewBox="0 0 12 17" aria-hidden="true"><path d="M0 0h9L2 16H0z" fill="#fff" /><path d="M9 0 2 15" stroke="#333" /></svg>
    <div className="ml-auto flex w-[468px] items-center">
      <span className="h-[14px] w-[5px] rounded-[2px] border border-[#9b9b9b] bg-white" />
      <button aria-label="Влево" className="flex w-4 justify-center"><Arrow dir="left" /></button>
      <div className="flex-[193]" />
      <div className="h-[14px] w-[15px] rounded-[2px] border border-[#909090] bg-linear-to-b from-[#f5f5f5] to-[#cfcfcf]" />
      <div className="flex-[205]" />
      <button aria-label="Вправо" className="mr-[17px] flex w-4 justify-center"><Arrow dir="right" /></button>
    </div>
  </div>
);

const CommandLine = () => (
  <div className="flex h-[58px] shrink-0 border-r-2 border-[#9a9a9a] bg-[#a9a9a9] font-['DejaVu_Sans_Mono'] text-[12px] leading-[15px] text-black">
    <div className="w-4 shrink-0 pl-[2px] pt-[3px]">
      <Icon w={12} h={4}><path d="M0 .5h12M0 2.500h12" stroke="#222" strokeDasharray="1 1" /></Icon>
    </div>
    <div className="flex flex-1 flex-col border-l border-white">
      <div className="h-10 bg-[#c8c8c8] pt-px">
        <p>Команда:</p>
        <p>Выполняется регенерация модели.</p>
      </div>
      <label className="flex h-[18px] items-center border-t border-[#8f8f8f] bg-white pt-[2px]">
        Команда:
        <input className="min-w-0 flex-1 pl-1 outline-none" />
      </label>
    </div>
  </div>
);

/* ---------- status bar ---------- */

const modes: { label: string; on?: boolean; icon: React.ReactNode }[] = [
  { label: "Подразумеваемые зависимости", icon: <><path d="M2 7h11M7.500 2v11" stroke="#222" strokeWidth="1.400" /><path d="M11.500 14v-5h3v3h-3" stroke="#2b5e9c" /><circle cx="11" cy="15" r="1.300" fill="#f06a28" stroke="none" /></> },
  { label: "Шаг", icon: <path d="M3 3.500h9M3 6.500h9M3 9.500h9M3 12.500h11M14.500 2v9" stroke="#333" strokeDasharray="1 2" /> },
  { label: "Сетка", on: true, icon: <><path d="M1.500 1.500h15v15h-15z" fill="#fff" stroke="#222" /><path d="M4.500 1v15M7.500 1v15M10.500 1v15M13.500 1v15M1 4.500h15M1 7.500h15M1 10.500h15M1 13.500h15" stroke="#333" /></> },
  { label: "Орто", icon: <path d="M1.500 1v15.500H17M1.500 10.500h6v6" stroke="#444" /> },
  { label: "Полярное отслеживание", icon: <path d="M13 3 8 10.500h8M13 13A5 5 0 1 1 9 5.500M11 6a5 5 0 0 1 2 5" stroke="#222" strokeWidth="1.200" /> },
  { label: "Привязка", on: true, icon: <><path d="M4.500 4.500h12v12h-12z" fill="#eef1f4" stroke="#444" /><circle cx="3" cy="3" r="1.800" fill="#fff" stroke="#e0561d" /></> },
  { label: "3D привязка", icon: <><path d="M5.500 5.500l3-3h8v9l-3 3h-8zM5.500 5.500h8v9M13.500 5.500l3-3" fill="#e9ebee" stroke="#444" /><circle cx="3" cy="15" r="1.800" fill="#fff" stroke="#e0561d" /></> },
  { label: "Отслеживание", on: true, icon: <path d="M12 4 4 13.500h11" stroke="#222" strokeWidth="1.300" /> },
  { label: "Динамическая ПСК", icon: <><path d="M3.500 1v14.500H17M4 15 12 7" stroke="#333" /><path d="M13 1l-3 5h3l-1 4 5-6h-3l1-3z" fill="#f6b73c" stroke="#b86d0c" strokeWidth=".6" /></> },
  { label: "Динамический ввод", icon: <><path d="M3 8h7M6.500 4.500v7" stroke="#111" strokeWidth="1.600" /><path d="M8.500 9.500h6v3h-6z" fill="#fff" stroke="#222" /></> },
  { label: "Вес линий", icon: <path d="M3 9h13M9.500 3v12" stroke="#111" strokeWidth="1.600" /> },
  { label: "Прозрачность", on: true, icon: <><path d="M1.500 2.500h15v13h-15z" fill="#a9cdf0" stroke="#315f93" /><path d="M2 4h14M2 8h14M2 12h14" stroke="#e6f2fc" strokeWidth="2" strokeDasharray="2 2" /></> },
  { label: "Быстрые свойства", icon: <><path d="M5.500 3.500h7v10h-7z" fill="#fff" stroke="#111" strokeWidth="1.300" /><path d="M7 6.500h4M7 8.500h4M7 10.500h4" stroke="#111" strokeDasharray="1 1 3" /></> },
  { label: "Циклический выбор", icon: <><path d="M1 3.500h6M4 1v6" stroke="#222" /><path d="M5.500 5.500h7v7h-7z" fill="#fff" stroke="#333" /><path d="M9.500 9.500h7v7h-7z" fill="#7fb55a" stroke="#2f6115" /></> },
];

const st = "flex h-full shrink-0 items-center justify-center border-r border-[#666] bg-linear-to-b from-[#c2c2c2] to-[#a0a0a0]";
const stOn = "flex h-full shrink-0 items-center justify-center border-r border-[#666] bg-linear-to-b from-[#e2f2f6] to-[#8fc6d6]";

const StatusBar = () => (
  <footer className="flex h-[22px] shrink-0 items-stretch border-t border-black bg-linear-to-b from-[#949494] to-[#777] font-['Liberation_Sans'] text-[12px] text-black">
    <div className="flex w-[179px] shrink-0 items-center whitespace-nowrap border-r border-[#555] pl-3 text-[11px]">17185.5467, -2318.4467, 0.0000</div>
    {modes.map((m) => (
      <button key={m.label} aria-label={m.label} className={`w-[22px] ${m.on ? stOn : st}`}>
        <Icon w={18} h={18}>{m.icon}</Icon>
      </button>
    ))}
    <div className="flex-1" />
    <button className={`w-[54px] ${st} whitespace-nowrap border-l`}>МОДЕЛЬ</button>
    <button aria-label="Лист" className={`w-[22px] ${st}`}>
      <Icon w={18} h={18}><path d="M3.500 2.500h11v10h-11z" fill="#eee" stroke="#222" /><path d="M6 5v5h5z" stroke="#222" /><path d="M1 15h16" stroke="#222" strokeWidth="1.500" /></Icon>
    </button>
    <button aria-label="Быстрый просмотр листов" className={`w-[22px] ${st}`}>
      <Icon w={18} h={18}><path d="M1.500 3.500h7v7h-7zM9.500 3.500h7v7h-7z" fill="#eee" stroke="#222" /><path d="M3 14h12" stroke="#222" strokeWidth="2" /></Icon>
    </button>
    <span className="w-[11px]" />
    <button className={`w-[51px] ${st} gap-[3px] whitespace-nowrap border-l`}>
      <Icon w={16} h={18}><path d="M8 2 6 8l-5 6h3l4-3 4 3h3l-5-6z" fill="#f4f4f4" stroke="#333" /></Icon>
      1:1 <Caret size={7} className="text-black" />
    </button>
    <button aria-label="Видимость аннотаций" className={`w-[22px] ${st}`}>
      <Icon w={18} h={18}><path d="M8 2 6 8l-5 7h3l4-3 4 3 2-2-4-5z" fill="#f4f4f4" stroke="#333" /><circle cx="13" cy="10" r="3" fill="#ffd75e" stroke="#c2790d" /></Icon>
    </button>
    <button aria-label="Автомасштаб" className={`w-[22px] ${st}`}>
      <Icon w={18} h={18}><path d="M9 2 7 8l-5 7h3l4-3 4 3h3l-5-7zM2 3l4 4M3 8l4-5" fill="#d5d5d5" stroke="#8b8b8b" /></Icon>
    </button>
    <span className="w-[7px]" />
    <button aria-label="Рабочее пространство" className={`w-[22px] ${st} border-l`}><GearIcon /></button>
    <button aria-label="Блокировка панелей" className={`w-[22px] ${st}`}>
      <Icon w={18} h={18}><path d="M2.500 8.500h9v7h-9z" fill="#f4f4f4" stroke="#222" strokeWidth="1.300" /><path d="M10 8V4.500c0-3 6-3 6 0V7M7 11v3" stroke="#222" strokeWidth="1.300" /></Icon>
    </button>
    <button aria-label="Аппаратное ускорение" className={`w-[22px] ${st}`}>
      <Icon w={18} h={18}><path d="M2.500 4.500h12v6h-12z" fill="#8b99ab" stroke="#4c5866" /><path d="M4.500 2v2M7.500 2v2M10.500 2v2M13 2v2M4.500 11v2M7.500 11v2" /><circle cx="14" cy="11" r="2.500" fill="#d5eafa" stroke="#4a8bc4" /><path d="M14 14v2" stroke="#4a8bc4" strokeWidth="2" /></Icon>
    </button>
    <button aria-label="Изоляция объектов" className="mx-[3px] my-[2px] flex w-[27px] items-center justify-center border border-[#555] bg-linear-to-b from-[#666] to-[#a0a0a0]">
      <Icon w={16} h={16}><path d="M5.500 11C2 7 4 1 8 1s6 6 2.500 10z" fill="#fff3a8" stroke="#b8923a" /><path d="M6 11.500h4v3.500H6z" fill="#d0d0d0" /></Icon>
    </button>
    <button aria-label="Меню строки состояния" className={`w-3 ${st} border-l`}><Caret size={5} className="text-black" /></button>
    <button aria-label="Очистить экран" className={`w-[22px] ${st}`}>
      <Icon w={16} h={16}><path d="M1.500 1.500h13v13h-13z" fill="#f4f4f4" stroke="#333" /><path d="M2 2h12v2.500H2z" fill="#444" stroke="none" /></Icon>
    </button>
    <div className="flex w-[17px] items-end justify-end pb-[2px]">
      <Icon w={12} h={12}><path d="M9 1.500h2M6 5.500h2M9.500 5.500h2M2 9.500h2M6 9.500h2M9.500 9.500h2" stroke="#d9d9d9" strokeWidth="2" /></Icon>
    </div>
  </footer>
);

export default function App() {
  return (
    <div className="relative flex h-screen min-h-[480px] flex-col overflow-hidden bg-linear-to-r from-[#98a3ad] to-[#c3c8cd] pt-[2px] font-['Open_Sans',sans-serif] text-[12px]">
      {/* window behind this one, seen past the right edge */}
      <span className="absolute right-0 top-[61px] h-[30px] w-[3px] bg-[#262626]" />
      <div className="mr-[3px] flex min-h-0 flex-1 flex-col rounded-[6px] border border-[#454d58] bg-[#d1dbe8] pb-[7px] pl-[7px] pr-[6px]">
        <TitleBar />
        <MenuBar />
        <TabRow />
        <Ribbon />
        <div className="h-[5px] shrink-0 bg-[#6a6a6a]" />
        <Canvas />
        <SheetTabs />
        <div className="h-[5px] shrink-0 bg-[#6a6a6a]" />
        <CommandLine />
        <StatusBar />
      </div>
      {/* system taskbar */}
      <div className="h-[3px] shrink-0 bg-[#b4d2ea]" />
      <span className="absolute -bottom-[22px] left-3 h-[29px] w-[29px] rounded-full border border-[#3d5a73] bg-[#a9bfd0]" />
    </div>
  );
}
